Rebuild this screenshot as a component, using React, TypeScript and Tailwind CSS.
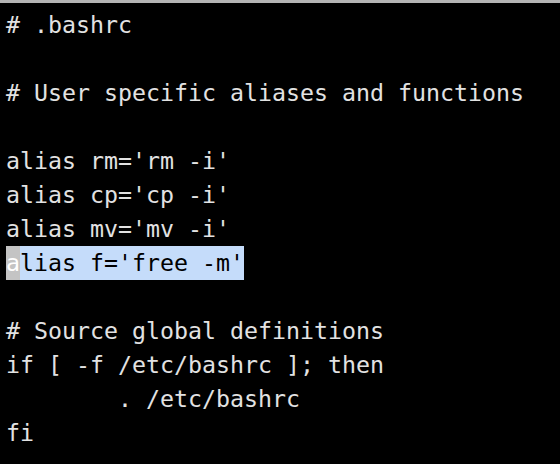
import React from "react";

const lines: string[] = [
  "# .bashrc",
  "",
  "# User specific aliases and functions",
  "",
  "alias rm='rm -i'",
  "alias cp='cp -i'",
  "alias mv='mv -i'",
  "__SEL__",
  "",
  "# Source global definitions",
  "if [ -f /etc/bashrc ]; then",
  "        . /etc/bashrc",
  "fi",
];

export default function App() {
  return (
    <div className="w-[560px] h-[464px] bg-black border-t-[3px] border-[#b4b4b4] overflow-hidden">
      <div
        className="pt-[5px] pl-[6px] text-[23.25px] leading-[34px] text-[#e2e2e2] whitespace-pre"
        style={{ fontFamily: '"DejaVu Sans Mono", "Liberation Mono", monospace' }}
      >
        {lines.map((l, i) =>
          l === "__SEL__" ? (
            <div key={i} className="h-[34px] flex">
              <span className="bg-[#c4c4c4] text-white">a</span>
              <span className="bg-[#c5dcfa] text-black">lias f='free -m'</span>
            </div>
          ) : (
            <div key={i} className="h-[34px]">
              {l || " "}
            </div>
          )
        )}
      </div>
    </div>
  );
}
